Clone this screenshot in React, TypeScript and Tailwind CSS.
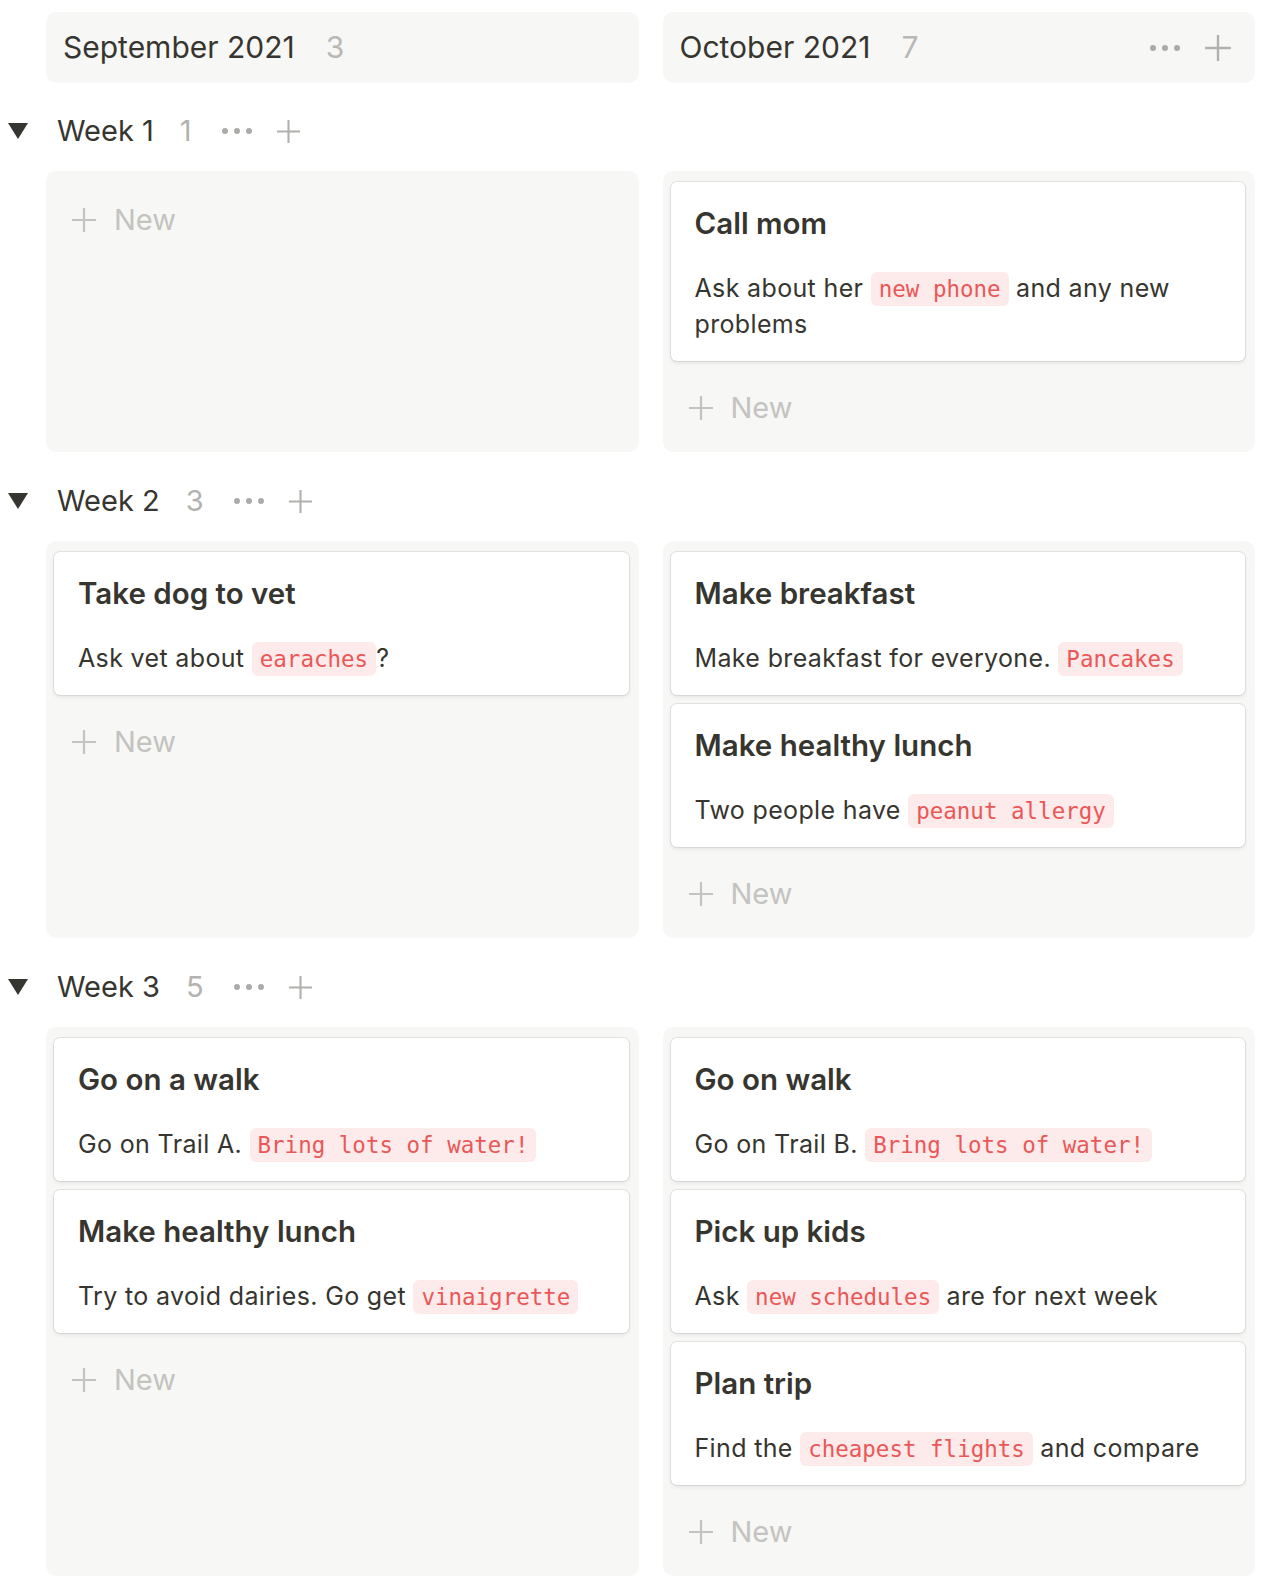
import type { ReactNode } from "react";

type Part = string | { code: string };

interface Card {
  title: string;
  body: Part[];
}

interface Week {
  label: string;
  count: number;
  sept: Card[];
  oct: Card[];
}

const weeks: Week[] = [
  {
    label: "Week 1",
    count: 1,
    sept: [],
    oct: [
      {
        title: "Call mom",
        body: ["Ask about her ", { code: "new phone" }, " and any new problems"],
      },
    ],
  },
  {
    label: "Week 2",
    count: 3,
    sept: [
      {
        title: "Take dog to vet",
        body: ["Ask vet about ", { code: "earaches" }, "?"],
      },
    ],
    oct: [
      {
        title: "Make breakfast",
        body: ["Make breakfast for everyone. ", { code: "Pancakes" }],
      },
      {
        title: "Make healthy lunch",
        body: ["Two people have ", { code: "peanut allergy" }],
      },
    ],
  },
  {
    label: "Week 3",
    count: 5,
    sept: [
      {
        title: "Go on a walk",
        body: ["Go on Trail A. ", { code: "Bring lots of water!" }],
      },
      {
        title: "Make healthy lunch",
        body: ["Try to avoid dairies. Go get ", { code: "vinaigrette" }],
      },
    ],
    oct: [
      {
        title: "Go on walk",
        body: ["Go on Trail B. ", { code: "Bring lots of water!" }],
      },
      {
        title: "Pick up kids",
        body: ["Ask ", { code: "new schedules" }, " are for next week"],
      },
      {
        title: "Plan trip",
        body: ["Find the ", { code: "cheapest flights" }, " and compare"],
      },
    ],
  },
];

const PlusIcon = ({ size, className }: { size: number; className?: string }) => (
  <svg width={size} height={size} viewBox="0 0 26 26" className={className}>
    <path d="M13 1v24M1 13h24" stroke="currentColor" strokeWidth="2.2" fill="none" />
  </svg>
);

const Dots = () => (
  <svg width="30" height="6" viewBox="0 0 30 6" className="text-[#acaba8]">
    <circle cx="3" cy="3" r="3" fill="currentColor" />
    <circle cx="15" cy="3" r="3" fill="currentColor" />
    <circle cx="27" cy="3" r="3" fill="currentColor" />
  </svg>
);

const Code = ({ children }: { children: ReactNode }) => (
  <span className="rounded-[6px] bg-[#fcebea] px-[8px] py-[4px] font-['DejaVu_Sans_Mono',monospace] text-[22.5px] leading-none tracking-normal text-[#eb5757]">
    {children}
  </span>
);

const TaskCard = ({ card }: { card: Card }) => (
  <div className="rounded-[6px] bg-white px-[24px] pb-[19px] pt-[22px] shadow-[0_0_0_1px_rgba(15,15,15,0.08),0_2px_4px_rgba(15,15,15,0.08)]">
    <p className="text-[29.5px] font-semibold leading-[39px]">{card.title}</p>
    <p className="mt-[27px] text-[25px] leading-[36px] tracking-[0.35px]">
      {card.body.map((part, i) =>
        typeof part === "string" ? (
          <span key={i}>{part}</span>
        ) : (
          <Code key={i}>{part.code}</Code>
        ),
      )}
    </p>
  </div>
);

const Column = ({ cards }: { cards: Card[] }) => (
  <div className="flex flex-col gap-[9px] rounded-[10px] bg-[#f7f7f5] pb-[7px] pl-[8px] pr-[10px] pt-[11px]">
    {cards.map((card) => (
      <TaskCard key={card.title} card={card} />
    ))}
    <div className="mt-[1px] flex h-[74px] items-center gap-[17px] pl-[17px] text-[#c4c3c0]">
      <PlusIcon size={26} />
      <span className="text-[29px]">New</span>
    </div>
  </div>
);

export default function App() {
  return (
    <div className="min-h-screen bg-white pt-[12px] font-['Inter',sans-serif] text-[#37352f]">
      <div className="ml-[46px] mr-[27px] grid grid-cols-2 gap-x-[24px]">
        <div className="flex h-[71px] items-center gap-[31px] rounded-[10px] bg-[#f7f7f5] pl-[17px]">
          <span className="text-[30px]">September 2021</span>
          <span className="text-[30px] text-[#b9b8b5]">3</span>
        </div>
        <div className="flex h-[71px] items-center rounded-[10px] bg-[#f7f7f5] pl-[17px] pr-[23px]">
          <span className="text-[30px]">October 2021</span>
          <span className="ml-[31px] text-[30px] text-[#b9b8b5]">7</span>
          <div className="ml-auto flex items-center gap-[24px]">
            <Dots />
            <PlusIcon size={28} className="text-[#b1b0ad]" />
          </div>
        </div>
      </div>

      {weeks.map((week, idx) => (
        <div key={week.label}>
          <div
            className={
              idx === 0
                ? "flex h-[88px] items-center pt-[8px]"
                : "flex h-[89px] items-center pt-[9px]"
            }
          >
            <div className="w-[57px] pl-[8px]">
              <svg width="20" height="16" viewBox="0 0 20 16">
                <polygon points="0,0 20,0 10,16" fill="#37352f" />
              </svg>
            </div>
            <span className="text-[29px]">{week.label}</span>
            <span className="ml-[26px] text-[29px] text-[#b3b2af]">{week.count}</span>
            <div className="ml-[30px]">
              <Dots />
            </div>
            <PlusIcon size={25} className="ml-[24px] text-[#b1b0ad]" />
          </div>
          <div className="ml-[46px] mr-[27px] grid grid-cols-2 gap-x-[24px]">
            <Column cards={week.sept} />
            <Column cards={week.oct} />
          </div>
        </div>
      ))}
    </div>
  );
}
